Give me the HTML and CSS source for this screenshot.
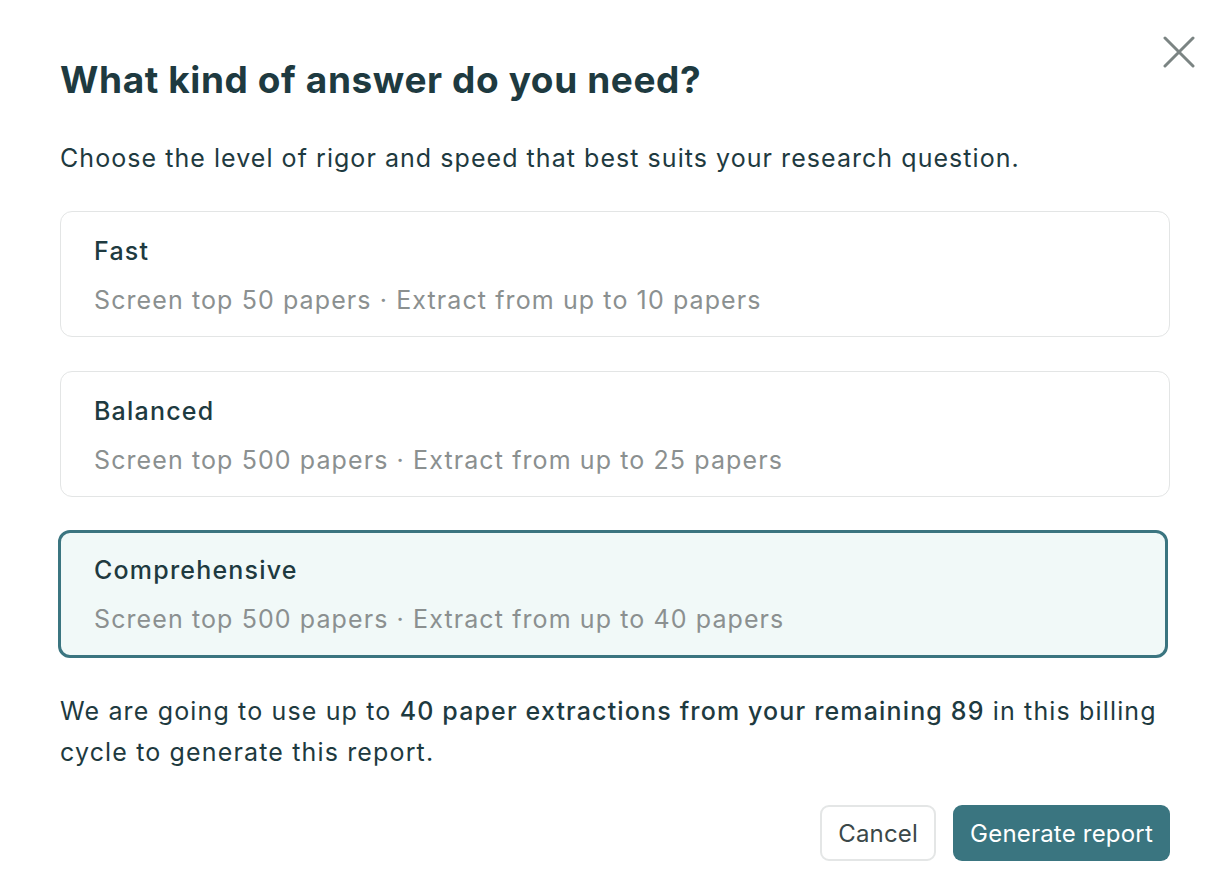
FILE: index.html
```html
<!DOCTYPE html>
<html>
<head>
<meta charset="utf-8">
<link rel="stylesheet" href="styles.css">
</head>
<body>
<div class="dialog">
  <button class="close" aria-label="Close">
    <svg width="32" height="32" viewBox="0 0 32 32"><path d="M2 2 L30 30 M30 2 L2 30" stroke="#7b8483" stroke-width="3" stroke-linecap="round" fill="none"/></svg>
  </button>
  <h1 class="title">What kind of answer do you need?</h1>
  <p class="subtitle">Choose the level of rigor and speed that best suits your research question.</p>
  <div class="options">
    <div class="option">
      <div class="opt-title">Fast</div>
      <div class="opt-desc">Screen top 50 papers · Extract from up to 10 papers</div>
    </div>
    <div class="option">
      <div class="opt-title">Balanced</div>
      <div class="opt-desc">Screen top 500 papers · Extract from up to 25 papers</div>
    </div>
    <div class="option selected">
      <div class="opt-title">Comprehensive</div>
      <div class="opt-desc">Screen top 500 papers · Extract from up to 40 papers</div>
    </div>
  </div>
  <p class="note">We are going to use up to <strong>40 paper extractions from your remaining 89</strong> in this billing cycle to generate this report.</p>
  <div class="actions">
    <button class="btn btn-cancel">Cancel</button>
    <button class="btn btn-primary">Generate report</button>
  </div>
</div>
</body>
</html>
```

FILE: styles.css
```css
* { box-sizing: border-box; }
html, body { margin: 0; padding: 0; background: #ffffff; }
body {
  font-family: Inter, "Noto Sans", "Liberation Sans", sans-serif;
  color: #1e3a40;
}
.dialog {
  position: relative;
  width: 1230px;
  height: 888px;
  padding: 58px 60px 0 60px;
}
.close {
  position: absolute;
  top: 36px;
  right: 35px;
  width: 32px;
  height: 32px;
  padding: 0;
  border: none;
  background: none;
  display: flex;
}
.title {
  margin: 0;
  font-size: 37px;
  line-height: 44px;
  font-weight: 700;
  letter-spacing: 0.6px;
  color: #1e3a40;
}
.subtitle {
  margin: 39px 0 0 0;
  font-size: 25px;
  line-height: 34px;
  letter-spacing: 1.05px;
  color: #1e3a40;
}
.options {
  margin-top: 36px;
  display: flex;
  flex-direction: column;
  gap: 34px;
}
.option {
  border: 1px solid #e3e5e5;
  border-radius: 12px;
  padding: 22px 32px 19px 33px;
  display: flex;
  flex-direction: column;
  gap: 15px;
}
.option.selected {
  border: 3px solid #3b7580;
  background: #f1f9f8;
  padding: 20px 30px 19px 33px;
  margin-left: -2px;
  margin-right: 2px;
  margin-top: -1px;
}
.opt-title {
  font-size: 25px;
  line-height: 34px;
  font-weight: 500;
  letter-spacing: 1.2px;
  color: #1e3a40;
}
.opt-desc {
  font-size: 25px;
  line-height: 34px;
  letter-spacing: 1.1px;
  color: #8b9090;
}
.note {
  margin: 33px 0 0 0;
  font-size: 25px;
  line-height: 41px;
  letter-spacing: 1.15px;
  color: #1e3a40;
}
.note strong { font-weight: 500; }
.actions {
  margin-top: 32px;
  display: flex;
  justify-content: flex-end;
  gap: 17px;
}
.btn {
  font-family: inherit;
  font-size: 24px;
  letter-spacing: 0.2px;
  height: 56px;
  border-radius: 9px;
  cursor: pointer;
}
.btn-cancel {
  background: #ffffff;
  border: 2px solid #e4e6e6;
  color: #3b4849;
  padding: 0 16px;
}
.btn-primary {
  background: #3a7580;
  border: none;
  color: #ffffff;
  padding: 0 17px;
}
```
